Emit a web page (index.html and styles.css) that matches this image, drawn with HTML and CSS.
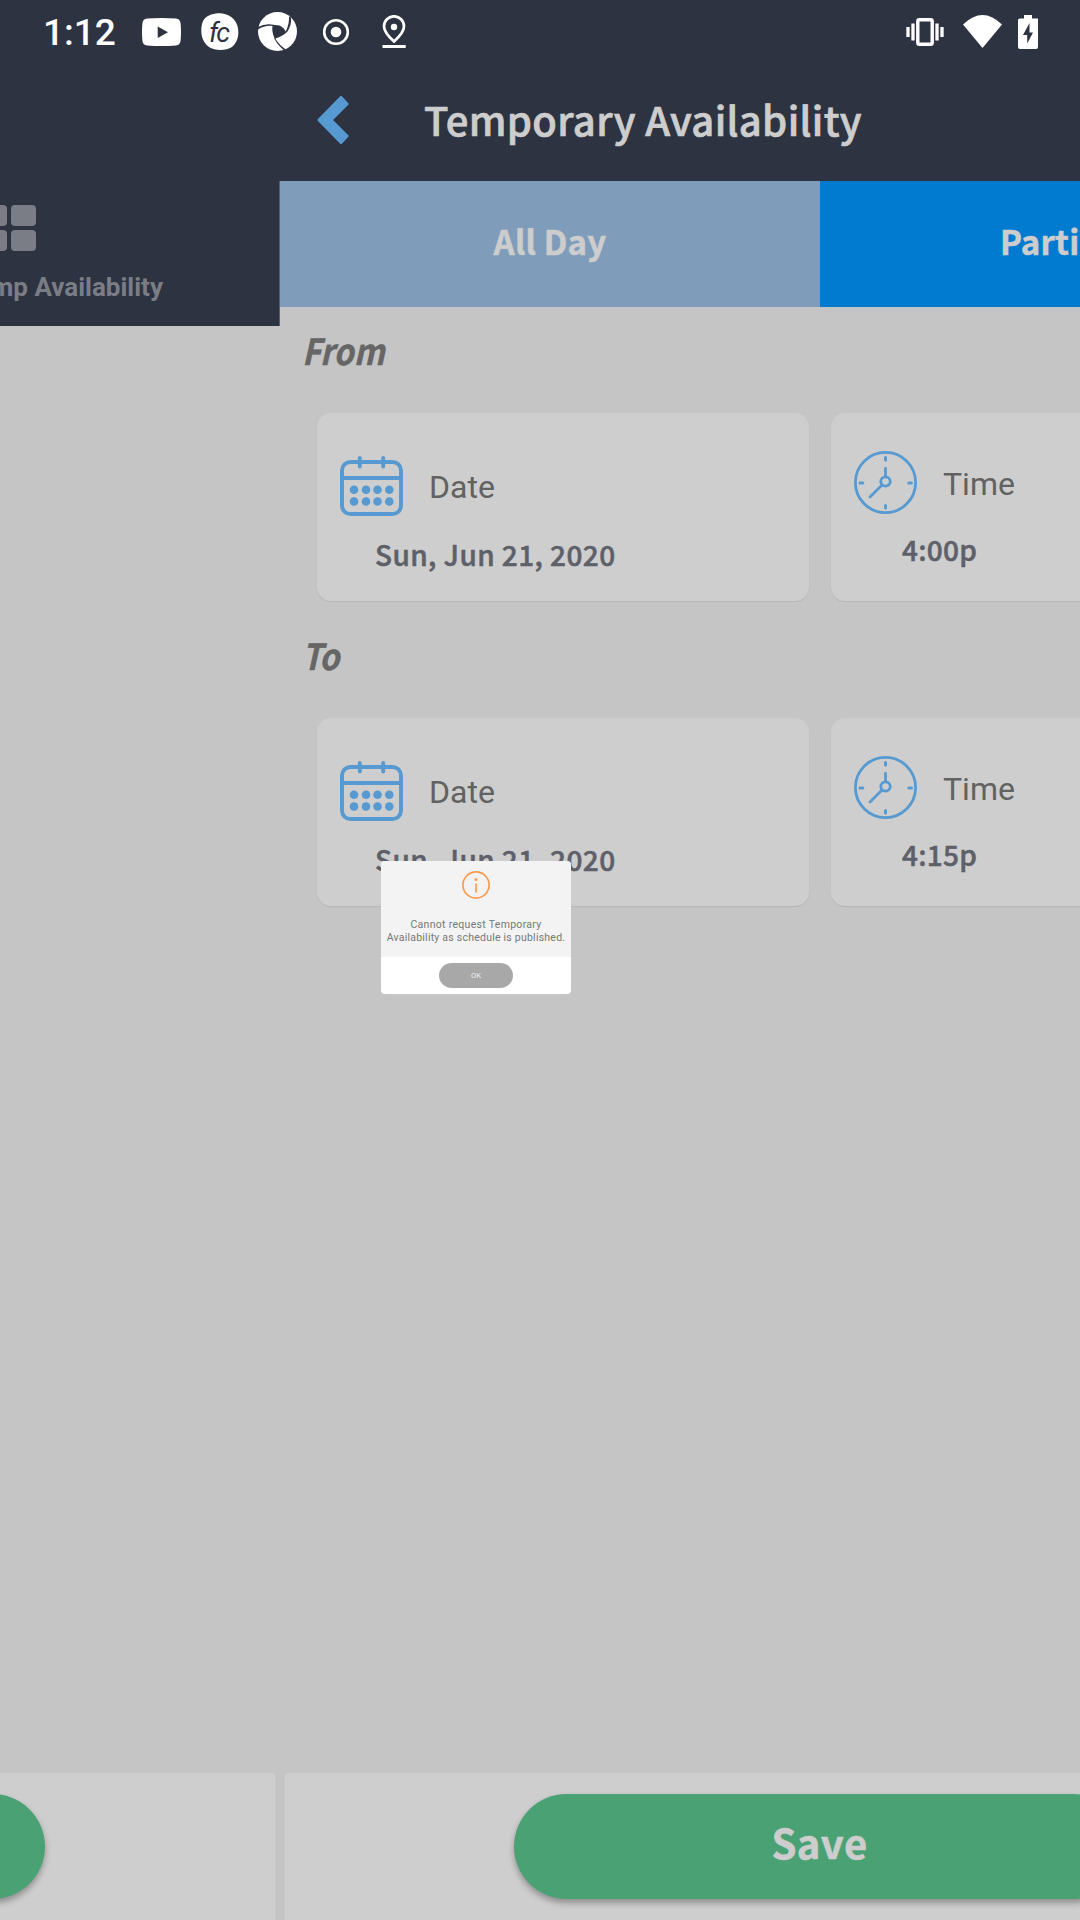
FILE: index.html
```html
<!DOCTYPE html>
<html lang="en">
<head>
<meta charset="utf-8">
<title>Temporary Availability</title>
<link rel="stylesheet" href="styles.css">
</head>
<body>
<div class="screen">
  <header class="status">
    <span class="clock">1:12</span>
    <div class="notifications">
      <svg width="39" height="28" viewBox="0 0 39 28"><path fill="#fff" fill-rule="evenodd" d="M5 .6Q19.500-.5 34 .6 38.300 1 38.600 5.500 39.400 14 38.600 22.500 38.300 27 34 27.400 19.500 28.500 5 27.400.7 27 .4 22.500-.4 14 .4 5.500.7 1 5 .6ZM15.700 8.500V20L26 14.200Z"/></svg>
      <svg class="fc" width="38" height="38" viewBox="0 0 38 38"><path fill="#fff" d="M15 .5C25-1 34 4 36.500 13 38.500 21 37 29 31 34 25 38 14 38 8 34 1 29-1 20 1 11 3 4 8 1.500 15 .5Z"/><text x="8" y="28.500" class="fc-text" textLength="21">fc</text></svg>
      <svg class="shutter" width="39" height="39" viewBox="0 0 39 39"><circle cx="19.500" cy="19.500" r="19.500" fill="#fff"/><path fill="#2e3341" d="M14.800 12.800 21.500 13.500Q26 15.500 28.300 20.500 26 23.500 16.800 26.800 13 19 14.800 12.800Z"/><path fill="#2e3341" d="M0 15Q8 11 16 13L15 14Q7 13 0 17.500ZM31 4.500Q31.500 12 27.500 20L28.800 20.500Q34 13 33 5.500ZM16 26Q20 34 27 39L28.500 38Q21 33 17 26ZM33 34.500 39 33V39H28L32 36Z"/></svg>
      <svg class="record" width="28" height="28" viewBox="0 0 28 28"><circle cx="14" cy="14" r="11.800" fill="none" stroke="#fff" stroke-width="2.600"/><circle cx="14" cy="14" r="5.300" fill="#fff"/></svg>
      <svg class="pin" width="24" height="34" viewBox="0 0 24 34"><path fill="none" stroke="#fff" stroke-width="2.700" d="M12 26.500Q2 17.500 2 11.300A10 10 0 0 1 22 11.300Q22 17.500 12 26.500Z"/><circle cx="12" cy="12" r="3.200" fill="#fff"/><path fill="#fff" d="M.5 30H23.700V33H.5Z"/></svg>
    </div>
    <div class="system">
      <svg width="38" height="28" viewBox="0 0 38 28"><rect x="11.800" y="1.800" width="14.400" height="24.400" rx="1.500" fill="none" stroke="#fff" stroke-width="3.400"/><path stroke="#fff" stroke-width="3.300" d="M2 9V19M7 5.500V22.500M31 5.500V22.500M36 9V19"/></svg>
      <svg class="wifi" width="40" height="34" viewBox="0 0 40 34"><path fill="#fff" d="M0 9.500Q19.500-9.500 39 9.500L19.500 33Z"/></svg>
      <svg class="battery" width="20" height="34" viewBox="0 0 20 34"><path fill="#fff" fill-rule="evenodd" d="M6 0H14V3.500H20V32Q20 34 18 34H2Q0 34 0 32V5Q0 3.500 2 3.500H6ZM11.500 8 5 20H9.200V28.500L15 17.500H11.500Z"/></svg>
    </div>
  </header>

  <div class="pages">
    <section class="previous">
      <div class="tabbar">
        <svg class="grid-icon" width="60" height="46" viewBox="0 0 60 46" fill="#7b7d86"><rect width="25" height="21" x="6" rx="4"/><rect x="35" width="25" height="21" rx="4"/><rect x="6" y="25" width="25" height="21" rx="4"/><rect x="35" y="25" width="25" height="21" rx="4"/></svg>
        <span class="tab-label">Temp Availability</span>
      </div>
      <div class="previous-body"></div>
      <footer class="footer footer-previous"><div class="button"></div></footer>
    </section>

    <section class="current">
      <div class="topbar">
        <svg width="32" height="48" viewBox="0 0 32 48"><path fill="#5799d1" stroke="#5799d1" stroke-width="3" stroke-linejoin="round" d="M24 1.500 30 8 14 24 30 40 24 46.500 2 24Z"/></svg>
        <h1 class="title">Temporary Availability</h1>
      </div>
      <nav class="segments">
        <div class="segment segment-all">All Day</div>
        <div class="segment segment-partial">Partial Day</div>
      </nav>
      <main class="form">
        <h2 class="legend"><span class="legend-text">From</span></h2>
        <div class="cards">
          <div class="card">
            <div class="card-head date-head">
              <svg width="63" height="60" viewBox="0 0 63 60"><g fill="none" stroke="#5799d1" stroke-width="3.900" stroke-linecap="round"><rect x="2" y="6" width="59" height="52" rx="8.500"/><path d="M3 22H60M19.800 2V10.500M43.200 2V10.500"/></g><g fill="#5799d1"><circle cx="14" cy="33.700" r="4.300"/><circle cx="26" cy="33.700" r="4.300"/><circle cx="37.500" cy="33.700" r="4.300"/><circle cx="49.300" cy="33.700" r="4.300"/><circle cx="14" cy="45.500" r="4.300"/><circle cx="26" cy="45.500" r="4.300"/><circle cx="37.500" cy="45.500" r="4.300"/><circle cx="49.300" cy="45.500" r="4.300"/></g></svg>
              <span class="card-label">Date</span>
            </div>
            <div class="card-value date-value">Sun, Jun 21, 2020</div>
          </div>
          <div class="card">
            <div class="card-head time-head">
              <svg width="63" height="63" viewBox="0 0 63 63"><g fill="none" stroke="#5799d1" stroke-width="2.800" stroke-linecap="round"><circle cx="31.500" cy="31.500" r="30.100"/><circle cx="31.500" cy="30.500" r="4.700"/><path d="M31.500 17.500V25.500M28 34 16 46"/><path d="M31.500 6.500V9M31.500 54.500V57M6 32H8.800M54.800 32H57.500" stroke-width="3"/></g></svg>
              <span class="card-label">Time</span>
            </div>
            <div class="card-value time-value">4:00p</div>
          </div>
        </div>
        <h2 class="legend"><span class="legend-text">To</span></h2>
        <div class="cards">
          <div class="card">
            <div class="card-head date-head">
              <svg width="63" height="60" viewBox="0 0 63 60"><g fill="none" stroke="#5799d1" stroke-width="3.900" stroke-linecap="round"><rect x="2" y="6" width="59" height="52" rx="8.500"/><path d="M3 22H60M19.800 2V10.500M43.200 2V10.500"/></g><g fill="#5799d1"><circle cx="14" cy="33.700" r="4.300"/><circle cx="26" cy="33.700" r="4.300"/><circle cx="37.500" cy="33.700" r="4.300"/><circle cx="49.300" cy="33.700" r="4.300"/><circle cx="14" cy="45.500" r="4.300"/><circle cx="26" cy="45.500" r="4.300"/><circle cx="37.500" cy="45.500" r="4.300"/><circle cx="49.300" cy="45.500" r="4.300"/></g></svg>
              <span class="card-label">Date</span>
            </div>
            <div class="card-value date-value">Sun, Jun 21, 2020</div>
          </div>
          <div class="card">
            <div class="card-head time-head">
              <svg width="63" height="63" viewBox="0 0 63 63"><g fill="none" stroke="#5799d1" stroke-width="2.800" stroke-linecap="round"><circle cx="31.500" cy="31.500" r="30.100"/><circle cx="31.500" cy="30.500" r="4.700"/><path d="M31.500 17.500V25.500M28 34 16 46"/><path d="M31.500 6.500V9M31.500 54.500V57M6 32H8.800M54.800 32H57.500" stroke-width="3"/></g></svg>
              <span class="card-label">Time</span>
            </div>
            <div class="card-value time-value">4:15p</div>
          </div>
        </div>
      </main>
      <footer class="footer footer-current"><div class="button">Save</div></footer>
    </section>
  </div>

  <div class="dialog">
    <div class="dialog-body">
      <svg width="28" height="28" viewBox="0 0 28 28"><circle cx="14" cy="14" r="13.100" fill="none" stroke="#ff9a4d" stroke-width="1.700"/><circle cx="14" cy="8.500" r="1.500" fill="#ff9a4d"/><path stroke="#ff9a4d" stroke-width="1.700" d="M14 12.500V21.500"/></svg>
      <p class="message"><span class="message-first">Cannot request Temporary</span><br>Availability as schedule is published.</p>
    </div>
    <div class="dialog-actions"><div class="ok">OK</div></div>
  </div>
</div>
</body>
</html>
```
FILE: styles.css
```css
* {
  box-sizing: border-box;
}

body {
  margin: 0;
  background: #c5c5c5;
  font-family: "Noto Sans CJK SC", "Noto Sans", sans-serif;
}

svg {
  display: block;
  flex: none;
}

.screen {
  position: relative;
  display: flex;
  flex-direction: column;
  width: 1080px;
  height: 1920px;
  overflow: hidden;
  background: #c5c5c5;
}

.status {
  display: flex;
  align-items: center;
  height: 63px;
  padding-left: 43px;
  padding-right: 42px;
  background: #2e3341;
}

.clock {
  width: 99px;
  color: #fff;
  font: 500 37px/44px Roboto, sans-serif;
  padding-top: 3px;
}

.notifications,
.system {
  display: flex;
  align-items: center;
}

.fc { margin-left: 20px; }
.fc-text { font: italic 400 27px Roboto, sans-serif; fill: #2e3341; }
.shutter { margin-left: 19px; }
.record { margin-left: 25px; }
.pin { margin-left: 32px; }

.system {
  margin-left: auto;
}

.wifi { margin-left: 19px; }
.battery { margin-left: 15px; }

.pages {
  display: flex;
  flex: 1;
  min-height: 0;
}

.previous {
  display: flex;
  flex-direction: column;
  width: 280px;
  overflow: hidden;
}

.tabbar {
  display: flex;
  flex-direction: column;
  align-items: flex-end;
  height: 263px;
  padding-top: 142px;
  padding-right: 117px;
  background: linear-gradient(#2e3341 118px, #5c5f69 118px) right / 1px 100% no-repeat #2e3341;
}

.grid-icon {
  margin-right: 127px;
}

.tab-label {
  margin-top: 20px;
  color: #7b7d86;
  font: 700 26px/32px Roboto, sans-serif;
  white-space: nowrap;
}

.previous-body {
  flex: 1;
}

.current {
  display: flex;
  flex-direction: column;
  width: 800px;
  overflow: hidden;
}

.topbar {
  display: flex;
  align-items: center;
  height: 118px;
  padding: 0 0 4px 37px;
  background: #2e3341;
}

.title {
  margin: -3px 0 0 75px;
  color: #cdcdcd;
  font-size: 40px;
  line-height: 60px;
  font-weight: 500;
  letter-spacing: .35px;
  -webkit-text-stroke: .7px #cdcdcd;
  white-space: nowrap;
}

.segments {
  display: flex;
  width: 1080px;
  height: 126px;
}

.segment {
  display: flex;
  align-items: center;
  justify-content: center;
  width: 540px;
  padding-bottom: 7px;
  color: #cdcdcd;
  font-size: 33px;
  font-weight: 700;
  letter-spacing: .2px;
  -webkit-text-stroke: .5px #cdcdcd;
}

.segment-all { background: #7f9dba; }
.segment-partial { background: #007bcf; }

.form {
  flex: 1;
  width: 1080px;
}

.legend {
  margin: 0;
  height: 106px;
  padding: 17px 0 0 22px;
  color: #666;
  font-size: 36px;
  line-height: 50px;
  font-style: italic;
  font-weight: 700;
}

.legend-text {
  display: inline-block;
  transform: scaleX(.89);
  transform-origin: left;
  -webkit-text-stroke: .4px #666;
}

.cards {
  display: flex;
  gap: 22px;
  height: 188px;
  margin-left: 37px;
  margin-bottom: 11px;
}

.card {
  width: 492px;
  border-radius: 14px;
  background: #cecece;
  box-shadow: 0 1px 1px #b6b6b6;
}

.card-head {
  display: flex;
  align-items: center;
  padding-left: 23px;
}

.date-head { padding-top: 43px; }
.time-head { padding-top: 38px; }

.card-label {
  margin: 2px 0 0 26px;
  color: #626262;
  font: 400 32px/38px Roboto, sans-serif;
}

.card-value {
  color: #5d6069;
  font-size: 28px;
  line-height: 42px;
  font-weight: 500;
  -webkit-text-stroke: .5px #5d6069;
  white-space: nowrap;
}

.date-value {
  padding: 17px 0 0 58px;
  letter-spacing: .42px;
}

.time-value {
  padding: 14px 0 0 71px;
  letter-spacing: .25px;
}

.footer {
  height: 147px;
  padding-top: 21px;
  background: #cecece;
}

.footer-previous {
  display: flex;
  justify-content: flex-end;
  margin-right: 5px;
  padding-right: 230px;
}

.footer-current {
  width: 1080px;
  margin-left: 5px;
  padding-left: 229px;
}

.button {
  display: flex;
  flex: none;
  align-items: center;
  justify-content: center;
  width: 611px;
  height: 105px;
  padding-bottom: 9px;
  border-radius: 53px;
  background: #4aa174;
  box-shadow: 0 4px 6px rgba(0, 0, 0, .3);
  color: #cdcdcd;
  font-size: 40px;
  font-weight: 700;
  letter-spacing: .4px;
  -webkit-text-stroke: .6px #cdcdcd;
}

.dialog {
  position: absolute;
  left: 381px;
  top: 861px;
  width: 190px;
  height: 133px;
  overflow: hidden;
  border-radius: 4px;
  background: #fff;
}

.dialog-body {
  display: flex;
  flex-direction: column;
  align-items: center;
  height: 96px;
  padding-top: 10px;
  background: #f3f3f3;
}

.message {
  margin: 19px 0 0;
  color: #777;
  font: 400 10.500px/13px Roboto, sans-serif;
  letter-spacing: .23px;
  text-align: center;
  white-space: nowrap;
}

.message-first {
  letter-spacing: .3px;
}

.dialog-actions {
  display: flex;
  justify-content: center;
  padding-top: 6px;
}

.ok {
  width: 74px;
  height: 25px;
  border-radius: 13px;
  background: #a8a8a8;
  color: #f0f0f0;
  font: 400 7.500px/25px Roboto, sans-serif;
  text-align: center;
}
```
